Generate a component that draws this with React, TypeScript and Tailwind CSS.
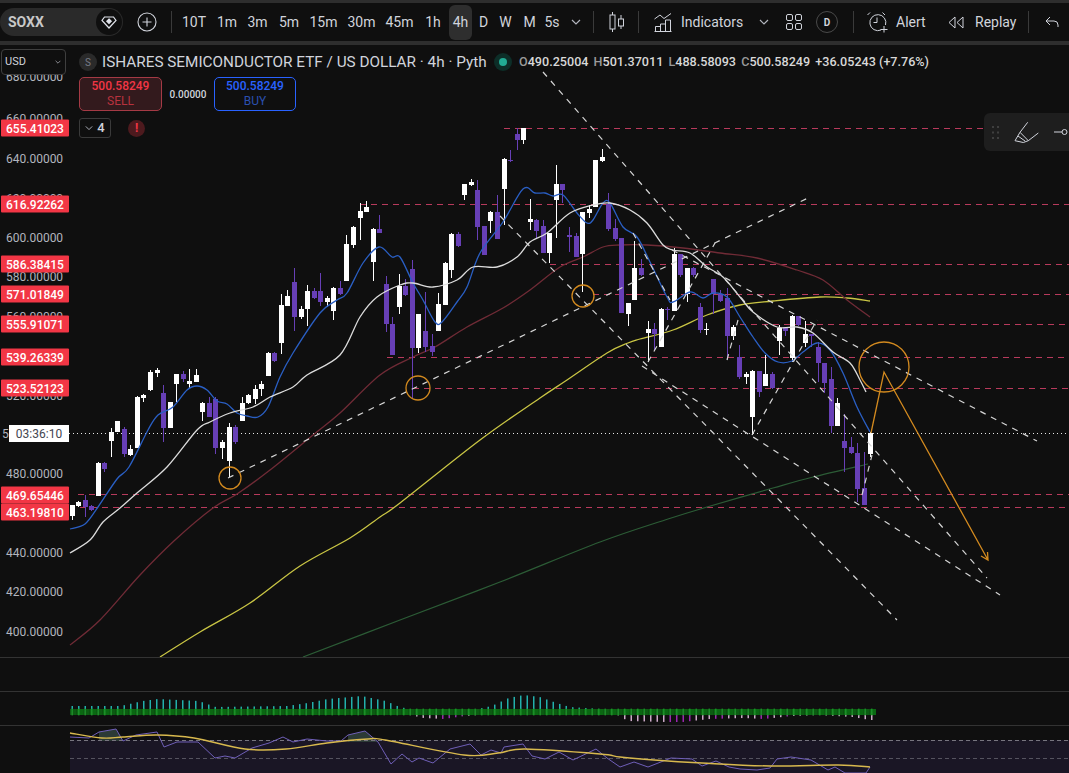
import React from 'react'

// x, wick top, body top, body bottom, wick bottom, up?
type Candle = [number, number, number, number, number, 0 | 1]

const candles: Candle[] = [
  [72, 505, 505, 516, 520, 1], [78, 501, 502, 506, 507, 1], [85, 495, 500, 507, 517, 0], [91, 505, 506, 510, 511, 0],
  [98, 462, 463, 496, 496, 1], [104, 462, 463, 469, 472, 0], [111, 428, 432, 441, 457, 1], [117, 421, 421, 432, 432, 1],
  [124, 427, 429, 454, 457, 0], [130, 445, 449, 455, 456, 1], [137, 396, 397, 448, 448, 1], [143, 394, 395, 398, 402, 1],
  [150, 370, 372, 390, 391, 1], [157, 368, 370, 373, 377, 1], [163, 385, 393, 428, 442, 0], [170, 402, 402, 428, 428, 1],
  [176, 374, 374, 384, 402, 1], [183, 371, 374, 379, 382, 0], [189, 369, 381, 384, 388, 1], [196, 369, 375, 382, 382, 1],
  [202, 402, 403, 412, 421, 1], [209, 397, 403, 417, 417, 0], [215, 397, 399, 448, 454, 0], [222, 440, 442, 448, 459, 1],
  [229, 423, 427, 461, 477, 1], [235, 425, 427, 442, 444, 0], [242, 397, 403, 421, 421, 1], [248, 394, 395, 403, 404, 1],
  [255, 385, 389, 399, 404, 1], [261, 381, 384, 389, 396, 1], [268, 352, 353, 376, 376, 1], [274, 352, 353, 361, 362, 0],
  [281, 294, 305, 343, 354, 1], [287, 290, 296, 306, 306, 1], [294, 268, 282, 317, 331, 0], [301, 306, 309, 317, 319, 1],
  [307, 285, 291, 309, 326, 1], [314, 288, 291, 298, 299, 0], [320, 273, 291, 302, 306, 0], [327, 296, 298, 302, 307, 1],
  [333, 287, 288, 311, 320, 1], [340, 281, 288, 294, 295, 0], [346, 235, 244, 281, 281, 1], [353, 226, 227, 245, 248, 1],
  [360, 203, 211, 218, 240, 1], [366, 201, 207, 212, 212, 1], [373, 228, 229, 262, 281, 1], [379, 215, 229, 233, 233, 0],
  [386, 276, 284, 324, 332, 0], [392, 317, 324, 355, 355, 0], [399, 274, 286, 307, 314, 1], [405, 279, 286, 295, 296, 0],
  [412, 260, 269, 348, 398, 0], [418, 314, 314, 348, 353, 1], [425, 292, 331, 347, 352, 0], [432, 334, 346, 352, 356, 0],
  [438, 293, 304, 331, 331, 1], [445, 262, 263, 305, 305, 1], [451, 233, 234, 270, 278, 1], [458, 232, 234, 246, 247, 0],
  [464, 184, 184, 195, 200, 1], [471, 179, 182, 185, 186, 1], [477, 180, 190, 227, 240, 0], [484, 226, 226, 255, 255, 0],
  [490, 211, 212, 221, 233, 1], [497, 195, 212, 239, 239, 0], [504, 158, 159, 189, 225, 1], [510, 150, 160, 161, 162, 0],
  [517, 128, 134, 140, 150, 0], [523, 128, 128, 140, 144, 1], [530, 199, 219, 222, 230, 1], [536, 219, 220, 231, 239, 0],
  [543, 220, 226, 253, 253, 0], [549, 233, 233, 253, 263, 1], [556, 165, 184, 200, 238, 1], [562, 184, 184, 190, 203, 0],
  [569, 227, 235, 237, 252, 0], [576, 233, 236, 257, 257, 0], [582, 212, 212, 254, 292, 1], [589, 205, 209, 213, 218, 1],
  [595, 160, 160, 207, 207, 1], [602, 149, 157, 161, 162, 1], [608, 193, 204, 229, 231, 0], [615, 219, 228, 239, 241, 0],
  [621, 238, 238, 313, 313, 0], [628, 303, 303, 314, 326, 1], [634, 241, 268, 300, 300, 1], [641, 259, 268, 275, 276, 0],
  [648, 321, 329, 333, 362, 1], [654, 323, 329, 334, 351, 0], [661, 308, 309, 347, 347, 1], [667, 307, 309, 310, 320, 0],
  [674, 248, 254, 311, 311, 1], [680, 254, 254, 275, 277, 0], [687, 268, 268, 294, 302, 1], [693, 267, 268, 275, 277, 0],
  [700, 303, 307, 330, 333, 0], [706, 323, 329, 330, 335, 1], [713, 279, 279, 294, 314, 0], [720, 290, 294, 301, 302, 0],
  [727, 288, 298, 336, 360, 0], [733, 325, 327, 336, 340, 1], [739, 345, 357, 377, 379, 0], [746, 372, 374, 377, 384, 1],
  [752, 370, 371, 417, 435, 1], [759, 371, 371, 392, 397, 0], [765, 355, 374, 386, 386, 1], [772, 372, 374, 388, 389, 0],
  [779, 325, 328, 341, 355, 1], [785, 327, 327, 331, 336, 0], [792, 315, 316, 358, 362, 1], [798, 316, 316, 325, 326, 0],
  [805, 321, 334, 343, 347, 1], [811, 334, 334, 336, 347, 0], [818, 342, 347, 363, 382, 0], [824, 363, 363, 383, 393, 0],
  [831, 367, 379, 426, 433, 0], [837, 398, 403, 426, 426, 1], [844, 414, 441, 448, 472, 0], [851, 437, 447, 453, 454, 0],
  [857, 443, 453, 489, 502, 0], [864, 452, 488, 505, 505, 0], [870, 432, 433, 454, 457, 1],
]

const blueLine = '70,529 85,524 98,507 117,479 129,467 148,430 158,415 173,407 187,390 197,386 207,390 217,401 227,404 237,413 247,416 258,417 268,407 280,377 293,353 320,313 337,300 347,293 363,263 379,247 392,257 400,257 413,283 423,300 435,322 442,322 457,302 467,287 480,253 503,222 523,189 535,193 545,193 553,196 563,195 577,213 587,223 593,220 603,203 610,203 623,227 637,237 650,262 667,297 673,302 690,292 703,298 713,293 727,297 740,317 753,337 765,353 778,362 792,361 803,352 817,343 830,350 843,373 857,407 870,432'
const whiteLine = '70,553 90,540 103,522 120,508 137,493 167,467 197,430 210,422 230,413 253,407 270,397 293,387 307,375 340,355 360,317 377,297 400,285 413,283 433,287 457,280 473,267 497,267 517,257 530,242 547,233 570,213 593,205 610,203 630,210 647,223 663,245 673,250 690,253 707,267 723,277 740,297 753,312 777,327 797,327 813,333 833,352 850,363 860,380 866,392'
const maroonLine = '70,645 100,620 140,575 175,540 213,508 237,494 270,470 313,435 340,413 380,375 413,357 435,347 467,327 503,308 530,290 560,267 583,257 603,247 620,245 647,245 683,248 720,253 757,258 797,270 823,280 847,300 870,317'
const yellowLine = '160,657 200,632 250,603 300,566 350,538 380,517 400,503 480,440 540,398 567,380 607,353 628,343 640,339 673,330 707,315 740,305 773,301 820,297 847,298 870,301'
const greenLine = '303,657 400,620 500,582 600,542 668,519 707,507 773,488 813,477 868,464'

const trendLines = [
  [228, 478, 810, 197], [543, 72, 987, 578], [500, 216, 897, 620], [672, 250, 1037, 441], [642, 366, 1000, 595],
  [752, 435, 817, 320], [648, 362, 715, 243], [633, 233, 670, 300], [727, 360, 738, 320], [862, 495, 872, 455],
]

const levels = [
  { y: 128, from: 504 }, { y: 204, from: 360 }, { y: 264, from: 550 }, { y: 294, from: 593 }, { y: 324, from: 740 },
  { y: 357, from: 387 }, { y: 388, from: 413 }, { y: 494, from: 78 }, { y: 507, from: 80 },
]

const ticks = [
  ['680.00000', 77, 6], ['660.00000', 119, 6], ['640.00000', 159, 6], ['620.00000', 199, 6], ['600.00000', 238, 6], ['580.00000', 277, 6],
  ['560.00000', 317, 6], ['540.00000', 356, 6], ['520.00000', 396, 6], ['500.00000', 434, 2], ['480.00000', 474, 6], ['460.00000', 513, 6],
  ['440.00000', 553, 6], ['420.00000', 592, 6], ['400.00000', 632, 6],
] as const

const priceTags = [
  ['655.41023', 128], ['616.92262', 204], ['586.38415', 264], ['571.01849', 294], ['555.91071', 324], ['539.26339', 357],
  ['523.52123', 388], ['469.65446', 495], ['463.19810', 512],
] as const

const timeframes = [
  ['10T', 'w-[34px]'], ['1m', 'w-[32px]'], ['3m', 'w-[29px]'], ['5m', 'w-[34px]'], ['15m', 'w-[35px]'], ['30m', 'w-[41px]'],
  ['45m', 'w-[35px]'], ['1h', 'w-[32px]'], ['4h', 'w-[23px] h-[35px] rounded-md bg-[#2e2e2e]'], ['D', 'w-[23px]'], ['W', 'w-[21px]'], ['M', 'w-[27px]'], ['5s', 'w-[18px]'],
] as const

// top and bottom edge of the histogram, as [x, y]
const histTop = [[70, 706], [120, 706], [142, 701], [157, 699], [198, 701], [215, 707], [286, 706], [307, 703], [327, 699], [361, 696], [385, 701], [399, 707], [409, 709], [477, 709], [491, 706], [508, 698], [523, 695], [539, 697], [556, 703], [569, 707], [600, 709], [874, 709]]
const histBottom = [[70, 715], [409, 715], [423, 718], [443, 719], [464, 716], [477, 715], [600, 715], [617, 715], [627, 721], [665, 722], [682, 722], [709, 719], [743, 718], [763, 719], [791, 716], [818, 715], [852, 717], [869, 720], [874, 720]]
const magenta = [[440, 462], [668, 690], [710, 722], [760, 768], [782, 790]]

const rsiLine = '70,737 89,738 99,732 116,729 123,741 136,735 157,732 164,747 177,742 198,742 215,758 225,756 235,758 252,748 269,743 283,737 293,742 307,739 327,741 341,741 348,735 365,731 378,742 391,764 402,754 412,762 419,758 433,763 450,749 470,744 481,755 491,750 501,753 504,747 523,744 532,756 545,759 559,752 573,760 596,749 607,758 620,767 634,762 648,767 671,758 692,759 702,766 716,761 729,767 740,769 757,770 770,768 777,759 791,757 811,760 828,770 835,767 845,773 866,773 870,767'
const rsiAvg = '70,733 102,738 123,737 157,735 194,738 245,749 286,749 327,743 368,739 385,740 464,755 498,753 525,749 600,754 620,757 654,760 702,763 770,766 838,765 870,767'

const lerp = (pts: number[][], x: number) => {
  for (let i = 1; i < pts.length; i++) {
    if (x <= pts[i][0]) {
      const [x0, y0] = pts[i - 1]
      const [x1, y1] = pts[i]
      return y0 + ((y1 - y0) * (x - x0)) / (x1 - x0)
    }
  }
  return pts[pts.length - 1][1]
}

// catmull-rom through the points, the averages are curves in the chart
const smooth = (line: string) => {
  const p = line.split(' ').map((q) => q.split(',').map(Number))
  let d = `M${p[0][0]} ${p[0][1]}`
  for (let i = 0; i < p.length - 1; i++) {
    const a = p[i - 1] || p[i]
    const b = p[i]
    const c = p[i + 1]
    const e = p[i + 2] || c
    d += `C${b[0] + (c[0] - a[0]) / 6} ${b[1] + (c[1] - a[1]) / 6} ${c[0] - (e[0] - b[0]) / 6} ${c[1] - (e[1] - b[1]) / 6} ${c[0]} ${c[1]}`
  }
  return d
}

const histX = Array.from({ length: 124 }, (_, i) => 71.5 + i * 6.5)

function Chevron({ x = 10 }: { x?: number }) {
  return (
    <svg width={x} height="6" viewBox="0 0 10 6" fill="none" stroke="#b2b5be" strokeWidth="1.2">
      <path d="M1 1l4 4 4-4" />
    </svg>
  )
}

function Sep() {
  return <div className="h-[22px] w-px bg-[#3a3a3a]" />
}

function TopBar() {
  return (
    <div className="flex h-[38px] items-center bg-[#0f0f0f] text-[14px] text-[#d1d4dc]">
      <div className="flex h-[28px] w-[123px] items-center justify-between rounded-full bg-[#2a2a2a] pl-2 pr-[1px]">
        <span className="font-bold text-[#c8c8c8]">SOXX</span>
        <span className="flex h-[26px] w-[26px] items-center justify-center rounded-full bg-[#0f0f0f]">
          <svg width="16" height="13" viewBox="0 0 16 13" fill="none" stroke="#e0e3eb" strokeWidth="1.2">
            <path d="M3.500 1h9L15 4.500 8 12 1 4.500z" />
            <path d="M8 3l2.200 2.200L8 7.400 5.800 5.200z" fill="#e0e3eb" />
          </svg>
        </span>
      </div>
      <svg className="ml-[14px] mr-[14px]" width="20" height="20" viewBox="0 0 20 20" fill="none" stroke="#d1d4dc" strokeWidth="1.1">
        <circle cx="10" cy="10" r="9" />
        <path d="M10 5.5v9M5.5 10h9" />
      </svg>
      <Sep />
      <div className="ml-[5px] flex items-center">
        {timeframes.map(([label, cls]) => (
          <span key={label} className={`flex items-center justify-center ${cls}`}>{label}</span>
        ))}
      </div>
      <span className="ml-[10px] mr-[12px] flex"><Chevron /></span>
      <Sep />
      <svg className="ml-[15px] mr-[13px]" width="16" height="22" viewBox="0 0 16 22" fill="none" stroke="#d1d4dc" strokeWidth="1">
        <path d="M3.5 1v3M3.5 18v3M12 4v4M12 15v3" />
        <rect x="1" y="4" width="5" height="14" />
        <rect x="9.5" y="8" width="5" height="7" />
      </svg>
      <Sep />
      <svg className="ml-[15px] mr-[9px]" width="18" height="20" viewBox="0 0 18 20" fill="none" stroke="#d1d4dc" strokeWidth="1">
        <path d="M.5 7l5.500-4 4 3.500L17 1.500" />
        <path d="M1.500 19.500v-5h5v5M6.500 19.500v-7.500h5v7.500M11.500 19.500V8h5v11.500M.5 19.500h17" />
      </svg>
      <span className="w-[78px]">Indicators</span>
      <Chevron />
      <svg className="ml-[17px] mr-[14px]" width="16" height="16" viewBox="0 0 16 16" fill="none" stroke="#d1d4dc" strokeWidth="1">
        <rect x=".5" y=".5" width="6" height="6" rx="1.5" />
        <rect x="9.5" y=".5" width="6" height="6" rx="1.5" />
        <rect x=".5" y="9.5" width="6" height="6" rx="1.5" />
        <rect x="9.5" y="9.5" width="6" height="6" rx="1.5" />
      </svg>
      <span className="mr-[15px] flex h-[22px] w-[22px] items-center justify-center rounded-full border border-[#4a4a4a] text-[10px] font-bold">D</span>
      <Sep />
      <svg className="ml-[13px] mr-[8px]" width="21" height="22" viewBox="0 0 21 22" fill="none" stroke="#d1d4dc" strokeWidth="1">
        <path d="M14 19a8 8 0 1 1 4.500-5" />
        <path d="M10 6.500v5H6.500M3 1.500L.5 4M15.500 1.500L18 4M17 15v6.500M13.500 18.500h7" />
      </svg>
      <span className="w-[52px]">Alert</span>
      <svg className="mr-[11px]" width="16" height="13" viewBox="0 0 16 13" fill="none" stroke="#d1d4dc" strokeWidth="1">
        <path d="M7 1L1 6.500 7 12zM15 1L9 6.500l6 5.500z" />
      </svg>
      <span className="w-[53px]">Replay</span>
      <Sep />
      <svg className="ml-[16px]" width="14" height="12" viewBox="0 0 14 12" fill="none" stroke="#d1d4dc" strokeWidth="1">
        <path d="M5 1L1 5l4 4M1 5h8a4 4 0 0 1 4 4v2" />
      </svg>
    </div>
  )
}

function CandleChart() {
  return (
    <svg className="block h-full w-full" viewBox="0 45 1069 612">
      {levels.map((l) => (
        <line key={l.y} x1={l.from} x2="1069" y1={l.y + 0.5} y2={l.y + 0.5} stroke="#b83a5c" strokeWidth="1" strokeDasharray="6 5" />
      ))}
      <line x1="69" x2="1069" y1="433.500" y2="433.500" stroke="#e8e8e8" strokeWidth="1" strokeDasharray="1 3" />
      <path d={smooth(greenLine)} fill="none" stroke="#2c5c36" strokeWidth="1.200" />
      <path d={smooth(yellowLine)} fill="none" stroke="#c9c544" strokeWidth="1.300" />
      <path d={smooth(maroonLine)} fill="none" stroke="#702b36" strokeWidth="1.300" />
      {candles.map(([x, wt, bt, bb, wb, up]) => (
        <g key={x} fill={up ? '#ffffff' : '#673fb6'}>
          <rect x={x} y={wt} width="1" height={wb - wt} />
          <rect x={x - 2} y={bt} width="5" height={Math.max(bb - bt, 1)} />
        </g>
      ))}
      <path d={smooth(blueLine)} fill="none" stroke="#2a5fc4" strokeWidth="1.300" />
      <path d={smooth(whiteLine)} fill="none" stroke="#dcdcdc" strokeWidth="1.300" />
      {trendLines.map(([x1, y1, x2, y2]) => (
        <line key={`${x1}-${y1}`} x1={x1} y1={y1} x2={x2} y2={y2} stroke="#d6d6d6" strokeWidth="1.200" strokeDasharray="6 6" />
      ))}
      <g fill="none" stroke="#d38a1f" strokeWidth="1.300">
        <circle cx="230" cy="478" r="11" />
        <circle cx="418" cy="388" r="12" />
        <circle cx="583" cy="296" r="11" />
        <circle cx="884" cy="367" r="25" />
        <path d="M871 433l13-61 104 188M981 556l7 4-.5-8" />
      </g>
    </svg>
  )
}

function PriceAxis() {
  return (
    <>
      {ticks.map(([label, y, left]) => (
        <span key={label} className="absolute -translate-y-1/2 text-[12px] leading-none text-[#b2b5be]" style={{ top: y - 45, left }}>
          {label}
        </span>
      ))}
      {priceTags.map(([label, y]) => (
        <span key={label} className="absolute left-[1px] flex h-[17px] w-[68px] -translate-y-1/2 items-center justify-center rounded-[1px] bg-[#f23645] text-[12px] font-medium text-white" style={{ top: y - 45 }}>
          {label}
        </span>
      ))}
      <span className="absolute left-[9px] top-[380px] flex h-[17px] w-[60px] items-center justify-center bg-white text-[12px] text-[#434651]">03:36:10</span>
    </>
  )
}

function Legend() {
  return (
    <>
      <div className="absolute left-[1px] top-[4px] flex h-[26px] w-[65px] items-center justify-between rounded-[4px] border border-[#3f3f3f] bg-[#0f0f0f] pl-[3px] pr-[4px] text-[11px] text-[#d1d4dc]">
        USD
        <Chevron x={6} />
      </div>
      <div className="absolute left-[79px] top-[7px] flex h-[20px] items-center whitespace-nowrap">
        <span className="flex h-[18px] w-[18px] items-center justify-center rounded-full bg-[#2a2a2a] text-[10px] text-[#787b86]">S</span>
        <span className="ml-[5px] w-[383px] text-[15.300px] text-[#d1d4dc]">ISHARES SEMICONDUCTOR ETF / US DOLLAR · 4h · Pyth</span>
        <span className="ml-[9px] flex h-[18px] w-[18px] items-center justify-center rounded-full bg-[#0d2e28]">
          <span className="h-[8px] w-[8px] rounded-full bg-[#22ab94]" />
        </span>
        <span className="ml-[7px] text-[12.600px] font-medium text-[#d8d8d8]">
          <span className="text-[#9a9a9a]">O</span>490.25004 <span className="ml-[2px] text-[#9a9a9a]">H</span>501.37011 <span className="ml-[2px] text-[#9a9a9a]">L</span>488.58093 <span className="ml-[2px] text-[#9a9a9a]">C</span>500.58249 <span className="ml-[2px]">+36.05243 (+7.76%)</span>
        </span>
      </div>
      <div className="absolute left-[79px] top-[32px] flex items-center">
        <div className="flex h-[34px] w-[83px] flex-col items-center justify-center rounded-[5px] border border-[#a53a45] bg-[#331a1d] text-[12px] leading-[15px] font-medium text-[#f23645]">
          500.58249
          <span className="font-normal text-[#b8323e]">SELL</span>
        </div>
        <span className="w-[52px] text-center text-[10px] font-medium text-[#d1d4dc]">0.00000</span>
        <div className="flex h-[34px] w-[82px] flex-col items-center justify-center rounded-[5px] border border-[#2962ff] bg-[#0f0f0f] text-[12px] leading-[15px] font-medium text-[#2962ff]">
          500.58249
          <span className="font-normal text-[#2b50b0]">BUY</span>
        </div>
      </div>
      <div className="absolute left-[79px] top-[73px] flex items-center">
        <span className="flex h-[20px] w-[32px] items-center justify-center gap-[4px] rounded-[3px] border border-[#3a3a3a] text-[13px] font-medium text-[#d1d4dc]">
          <Chevron x={8} />4
        </span>
        <span className="ml-[17px] flex h-[17px] w-[17px] items-center justify-center rounded-full bg-[#4d1a1e] text-[12px] font-bold text-[#f23645]">!</span>
      </div>
      <div className="absolute right-0 top-[68px] flex h-[38px] w-[85px] items-center rounded-l-md bg-[#1e1e1e] pl-[8px]">
        <svg width="7" height="13" viewBox="0 0 7 13" fill="#3f3f3f">
          <rect width="2" height="2" /><rect x="5" width="2" height="2" /><rect y="5.500" width="2" height="2" /><rect x="5" y="5.500" width="2" height="2" /><rect y="11" width="2" height="2" /><rect x="5" y="11" width="2" height="2" />
        </svg>
        <svg className="ml-[15px]" width="25" height="23" viewBox="0 0 25 23" fill="none" stroke="#d1d4dc" strokeWidth="1">
          <path d="M13.700 1.300L6 11.300l8.300 8.400 10-7.700M6 11.300L1 19.700l8.300 1.800 5-1.800M4 15l7 5" />
        </svg>
        <svg className="ml-[15px] shrink-0" width="14" height="6" viewBox="0 0 14 6" fill="none" stroke="#d1d4dc" strokeWidth="1">
          <path d="M0 3h8" /><circle cx="10.500" cy="3" r="2.500" />
        </svg>
      </div>
    </>
  )
}

function Histogram() {
  return (
    <svg className="block h-[33px] w-full" viewBox="0 692 1069 33">
      {histX.map((x) => {
        const top = lerp(histTop, x)
        const bottom = lerp(histBottom, x)
        const deep = magenta.some(([a, b]) => x >= a && x <= b)
        return (
          <g key={x}>
            <rect x={x} y={top} width="1.500" height={712 - top} fill="#22b0ac" />
            <rect x={x} y="712" width="1.500" height={bottom - 712} fill={deep ? '#9c27b0' : '#cdaac9'} />
          </g>
        )
      })}
      {histX.map((x, i) => (
        <rect key={x} x={x - 1.500} y="709" width="6.500" height="6" fill={i % 2 ? '#0a7012' : '#0c6212'} opacity="0.92" />
      ))}
      {histX.map((x) => (
        <rect key={x} x={x} y="708.500" width="1.500" height="7" fill="#1f9a2c" opacity="0.7" />
      ))}
    </svg>
  )
}

function Rsi() {
  return (
    <svg className="block h-full w-full" viewBox="0 726 1069 47">
      <rect x="70" y="740" width="999" height="33" fill="#1a1625" />
      <path d="M99 732l17-3 7 12h-24zM348 735l17-4 13 11h-30z" fill="#2c3a36" />
      <line x1="70" x2="1069" y1="740.500" y2="740.500" stroke="#77757f" strokeDasharray="4 3" />
      <line x1="70" x2="1069" y1="758.500" y2="758.500" stroke="#55535f" strokeDasharray="4 3" />
      <polyline points={rsiLine} fill="none" stroke="#6f5fb8" strokeWidth="1" />
      <path d={smooth(rsiAvg)} fill="none" stroke="#d8b94e" strokeWidth="1.400" />
    </svg>
  )
}

export default function App() {
  return (
    <div className="flex h-[773px] w-[1069px] flex-col overflow-hidden bg-[#0f0f0f] font-['Roboto',sans-serif]">
      <div className="h-[3px] bg-[#2e2e2e]" />
      <TopBar />
      <div className="h-[4px] bg-[#2e2e2e]" />
      <div className="relative h-[612px]">
        <CandleChart />
        <PriceAxis />
        <Legend />
      </div>
      <div className="h-[34px] border-t border-[#333333]" />
      <div className="h-[34px] border-t border-[#333333]">
        <Histogram />
      </div>
      <div className="flex-1 border-t border-[#333333]">
        <Rsi />
      </div>
    </div>
  )
}
